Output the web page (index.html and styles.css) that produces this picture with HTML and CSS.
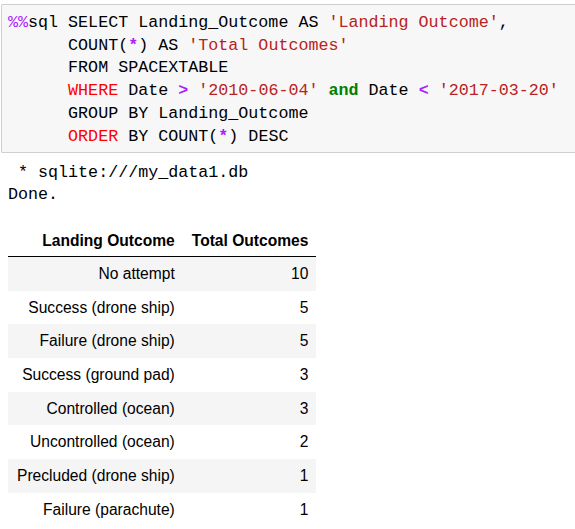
FILE: index.html
```html
<!DOCTYPE html>
<html>
<head>
<meta charset="utf-8">
<link rel="stylesheet" href="styles.css">
</head>
<body>
<div class="cell">
<pre class="code"><span class="magic">%%</span>sql SELECT Landing_Outcome AS <span class="str">'Landing Outcome'</span>,
      COUNT(<span class="op">*</span>) AS <span class="str">'Total Outcomes'</span>
      FROM SPACEXTABLE
      <span class="kw">WHERE</span> Date <span class="op">&gt;</span> <span class="str">'2010-06-04'</span> <span class="and">and</span> Date <span class="op">&lt;</span> <span class="str">'2017-03-20'</span>
      GROUP BY Landing_Outcome
      <span class="kw">ORDER</span> BY COUNT(<span class="op">*</span>) DESC</pre>
</div>
<pre class="out"> * sqlite:///my_data1.db
Done.</pre>
<table class="result">
<thead>
<tr><th>Landing Outcome</th><th>Total Outcomes</th></tr>
</thead>
<tbody>
<tr><td>No attempt</td><td>10</td></tr>
<tr><td>Success (drone ship)</td><td>5</td></tr>
<tr><td>Failure (drone ship)</td><td>5</td></tr>
<tr><td>Success (ground pad)</td><td>3</td></tr>
<tr><td>Controlled (ocean)</td><td>3</td></tr>
<tr><td>Uncontrolled (ocean)</td><td>2</td></tr>
<tr><td>Precluded (drone ship)</td><td>1</td></tr>
<tr><td>Failure (parachute)</td><td>1</td></tr>
</tbody>
</table>
</body>
</html>
```
FILE: styles.css
```css
html, body {
  margin: 0;
  padding: 0;
  background: #ffffff;
}
body {
  padding: 4px 0 0 1px;
  overflow: hidden;
}
.cell {
  background: #f7f7f7;
  border: 1px solid #cfcfcf;
  border-right: none;
  border-radius: 2px 0 0 2px;
  padding: 7px 0 4px 6px;
}
.code, .out {
  margin: 0;
  font-family: "Liberation Mono", "DejaVu Sans Mono", monospace;
  font-size: 16.7px;
  line-height: 22.7px;
  color: #000;
}
.magic { color: #aa22ff; }
.str { color: #ba2121; }
.kw { color: #ff0000; }
.op { color: #aa22ff; font-weight: bold; }
.and { color: #008000; font-weight: bold; }
.out {
  padding: 9px 0 0 7px;
  line-height: 22px;
}
.result {
  margin: 18px 0 0 7px;
  border-collapse: collapse;
  font-family: "Liberation Sans", Arial, sans-serif;
  font-size: 15.6px;
  color: #000;
}
.result th, .result td {
  text-align: right;
  padding: 8px 8px 8px 9px;
  line-height: 17.7px;
  white-space: nowrap;
}
.result th {
  font-weight: bold;
  padding-bottom: 6px;
  border-bottom: 1px solid #000;
}
.result tbody tr:nth-child(odd) {
  background: #f5f5f5;
}
```
